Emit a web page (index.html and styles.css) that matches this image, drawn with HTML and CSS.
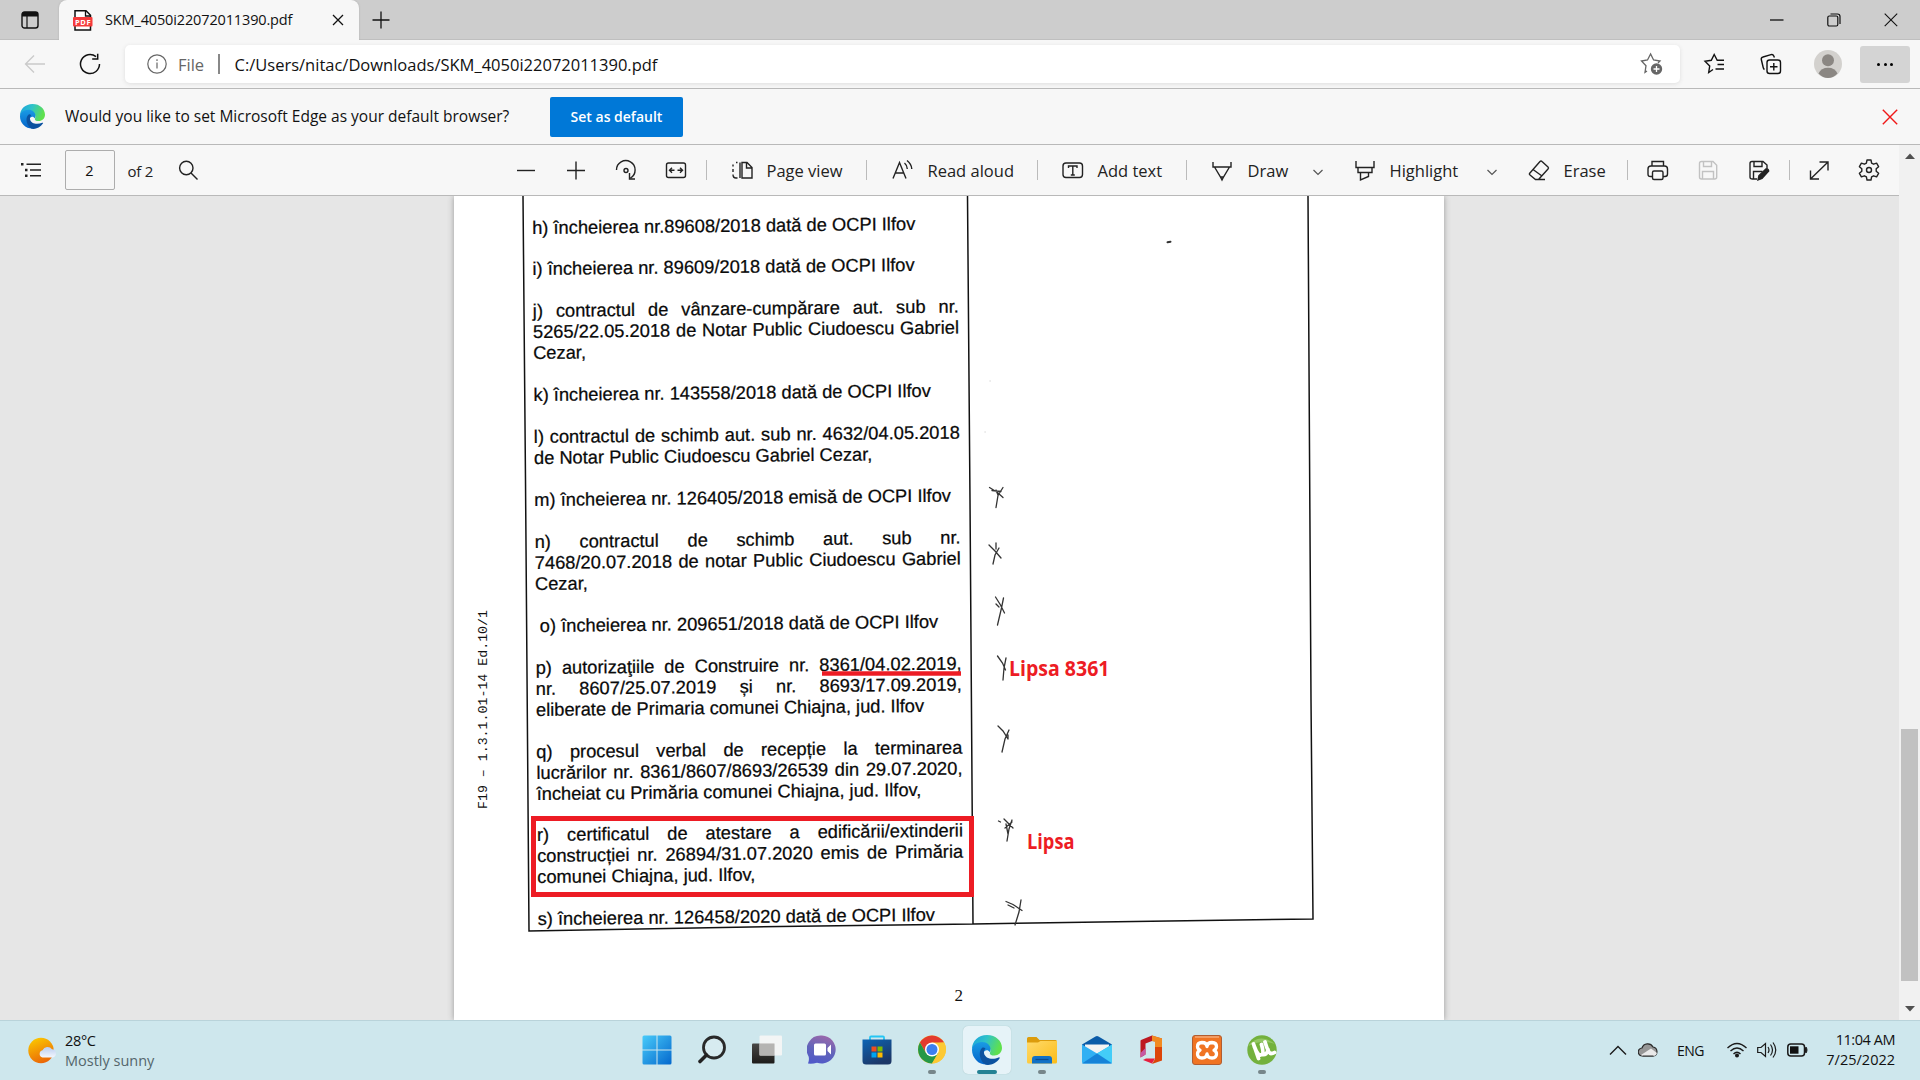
FILE: index.html
```html
<!DOCTYPE html>
<html lang="en">
<head>
<meta charset="utf-8">
<title>SKM_4050i22072011390.pdf</title>
<link rel="stylesheet" href="styles.css">
</head>
<body>
<svg width="0" height="0" class="defs">
  <defs>
    <linearGradient id="eg" x1="0" y1="0" x2="1" y2=".3"><stop offset="0" stop-color="#1ba0e0"/><stop offset=".5" stop-color="#2fc3c8"/><stop offset="1" stop-color="#5fe04e"/></linearGradient>
    <linearGradient id="eb" x1="0" y1="0" x2="0" y2="1"><stop offset="0" stop-color="#1a9be4"/><stop offset="1" stop-color="#0463c9"/></linearGradient>
    <symbol id="edge" viewBox="0 0 30 30">
      <path d="M0 14C0 6 6.500 0 15 0c9 0 15 6 15 13 0 4.500-3.500 7.500-7.500 7.500-3.500 0-5-1.300-4.600-2.600 1.400-2.900.5-7.900-5.900-7.900C6 10 1 12 0 14z" fill="url(#eg)"/>
      <path d="M0 15C0 11 4 7 10 7c5 0 8.500 3.300 8.500 7 0 1.600-.6 2.900-.8 3.300C16 14 12 15 11.500 18.500c-.4 5 4.500 8.500 9 9.500C18 30 9 31 4 25 1.500 22 0 19 0 15z" fill="url(#eb)"/>
      <path d="M10.500 12.500C6 16 7 26 14 29.800c5 .8 10.500-1.900 13.500-6.300.6-.9 0-1.400-.9-1C21 25 13 24 12 18c-.3-2 .5-3.500 1.500-4.500-.8-.9-2-1.300-3-1z" fill="#0c52a0"/>
    </symbol>
  </defs>
</svg>

<header class="tabbar">
  <div class="tab-actions"><svg width="18" height="18" viewBox="0 0 18 18"><rect x="1" y="1" width="16" height="16" rx="2.500" fill="none" stroke="#111" stroke-width="1.400"/><path d="M1 2.500Q1 1 3 1h12q2 0 2 1.500V5.500H1z" fill="#111"/><path d="M6 5v12" stroke="#111" stroke-width="1.200"/></svg></div>
  <div class="tab">
    <svg class="tab-icon" width="20" height="21" viewBox="0 0 20 21"><path d="M2 .8h11l4.500 4.500V20H2z" fill="#fff" stroke="#111" stroke-width="1.500"/><path d="M12.500 1v5H17.500" fill="none" stroke="#111" stroke-width="1.300"/><rect x="0" y="7" width="19.500" height="9.500" rx="1" fill="#f53b3b"/><text x="2" y="14.500" font-size="7.500" textLength="15.500" class="pdf-badge">PDF</text></svg>
    <span class="tab-title">SKM_4050i22072011390.pdf</span>
    <svg class="tab-close" width="12" height="12" viewBox="0 0 12 12"><path d="M1 1l10 10M11 1L1 11" stroke="#111" stroke-width="1.300"/></svg>
  </div>
  <svg class="newtab" width="18" height="18" viewBox="0 0 18 18"><path d="M9 .5v17M.5 9h17" stroke="#111" stroke-width="1.300"/></svg>
  <div class="window-controls">
    <svg width="14" height="14" viewBox="0 0 14 14"><path d="M0 7h13.500" stroke="#000" stroke-width="1.200"/></svg>
    <svg width="14" height="14" viewBox="0 0 14 14" fill="none" stroke="#111" stroke-width="1.200"><rect x=".8" y="3" width="10" height="10" rx="1.500"/><path d="M3.500 1h7q2.500 0 2.500 2.500v7.500"/></svg>
    <svg width="14" height="14" viewBox="0 0 14 14"><path d="M.7.700l12.500 12.500M13.200.700L.700 13.200" stroke="#111" stroke-width="1.100"/></svg>
  </div>
</header>

<nav class="navbar">
  <svg class="back" width="22" height="20" viewBox="0 0 22 20" fill="none" stroke="#cacaca" stroke-width="1.300"><path d="M21 10H1.500M10 1.500L1.500 10l8.500 8.500"/></svg>
  <svg class="reload" width="22" height="22" viewBox="0 0 22 22" fill="none" stroke="#111" stroke-width="1.500"><path d="M20.500 11a9.500 9.500 0 1 1-3.500-7.300M18.700.7v5.300h-5.500"/></svg>
  <div class="address">
    <svg class="info" width="20" height="20" viewBox="0 0 20 20" fill="none" stroke="#666" stroke-width="1.200"><circle cx="10" cy="10" r="9.200"/><path d="M10 8.500v6M10 5.300v1.600"/></svg>
    <span class="scheme">File</span><span class="bar"></span>
    <span class="url">C:/Users/nitac/Downloads/SKM_4050i22072011390.pdf</span>
    <svg class="addfav" width="24" height="24" viewBox="0 0 24 24"><path d="M7 19l-2 1.300 1-6.600L1.500 9l6-1L10.600 2l3 6 6.400 1-2 2" fill="none" stroke="#666" stroke-width="1.300"/><circle cx="16.500" cy="17" r="5.700" fill="#666"/><path d="M16.500 14v6M13.500 17h6" stroke="#fff" stroke-width="1.300"/></svg>
  </div>
  <div class="nav-icons">
    <svg width="24" height="24" viewBox="0 0 24 24" fill="none" stroke="#111" stroke-width="1.400"><path d="M10 17.500L5.700 20.500l1-6.500L2 9.300l6.300-1L11.200 2.500l3 5.800H21M14.500 12.500H21M12.500 17H21"/></svg>
    <svg width="24" height="24" viewBox="0 0 24 24" fill="none" stroke="#111" stroke-width="1.400"><rect x="8" y="8" width="13.500" height="13.500" rx="2.500"/><path d="M14.800 11v7.500M11 14.800h7.500M5.500 17.500Q4.500 17 4.200 15.500L2.300 7.500Q2 5.500 4 5l8-2.400q2-.6 2.800 1.500l.6 1.500"/></svg>
    <svg width="28" height="28" viewBox="0 0 28 28"><circle cx="14" cy="14" r="14" fill="#d3d1ce"/><circle cx="14" cy="10.300" r="6" fill="#8b8783"/><path d="M4.500 23.500Q7 17.700 14 17.700t9.500 5.800Q19 28 14 28t-9.500-4.500z" fill="#8b8783"/></svg>
    <span class="menu"><i></i><i></i><i></i></span>
  </div>
</nav>

<section class="infobar">
  <svg width="25" height="25"><use href="#edge"/></svg>
  <span class="info-text">Would you like to set Microsoft Edge as your default browser?</span>
  <button class="default-btn">Set as default</button>
  <svg class="dismiss" width="16" height="16" viewBox="0 0 16 16"><path d="M.8.800l14.400 14.400M15.200.8L.800 15.200" stroke="#f01818" stroke-width="1.400"/></svg>
</section>

<div class="viewer">
  <main class="pane">
    <div class="pdfbar">
      <svg class="i" viewBox="0 0 24 24"><path d="M7.500 6.300H22M11 12h11M11 17.700h11" /><path d="M2 6.300h2.500M6 12h2.500M6 17.700h2.500" stroke-width="2.400"/></svg>
      <span class="pagebox">2</span>
      <span class="t oftwo">of 2</span>
      <svg class="i" viewBox="0 0 24 24"><circle cx="10.300" cy="10" r="6.700"/><path d="M15 15l6.500 6.500"/></svg>
      <svg class="i" viewBox="0 0 24 24"><path d="M3 12.500h18"/></svg>
      <svg class="i" viewBox="0 0 24 24"><path d="M3 12.500h18M12 3.500v18"/></svg>
      <svg class="i" viewBox="0 0 24 24"><path d="M2.500 12A9.300 9.300 0 1 1 16.500 20M15.500 15v6h5.500"/><circle cx="12" cy="12.500" r="2"/></svg>
      <svg class="i" viewBox="0 0 24 24"><rect x="2.500" y="5" width="19" height="14.500" rx="2"/><path d="M10.500 12.300H5.500M8 9.800l-2.500 2.500L8 14.800M13.500 12.300h5M16 9.800l2.500 2.500L16 14.800"/></svg>
      <b></b>
      <svg class="i" viewBox="0 0 24 24"><path d="M10 4.500v15.500M7.500 4.500H6M3 6.500v2M3 11v3M3 16.500Q3 20 6 20h1.500"/><path d="M12 4.500h5l5 5V20H12zM16.500 4.500v5.500H22"/></svg>
      <span class="t pv">Page view</span>
      <b></b>
      <svg class="i" viewBox="0 0 24 24"><path d="M2 20.500L8.500 4.500 15 20.500M4.500 15h8M13.500 5Q16 7 16.300 11M16 2.500Q20.500 6 20.800 11"/></svg>
      <span class="t ra">Read aloud</span>
      <b></b>
      <svg class="i" viewBox="0 0 24 24"><rect x="2" y="5" width="19.500" height="14.500" rx="3"/><path d="M7.500 10V8h8.500v2M11.800 8v9M9.800 17h4"/></svg>
      <span class="t at">Add text</span>
      <b></b>
      <svg class="i" viewBox="0 0 24 24"><path d="M3 4v5h18V4M4.500 9l6 10h3l6-10M10.500 19L12 22l1.500-3"/></svg>
      <span class="t dr">Draw</span>
      <svg class="c" viewBox="0 0 14 10"><path d="M2.500 3L7 7.500 11.500 3"/></svg>
      <svg class="i" viewBox="0 0 24 24"><path d="M3 3v6.500h18V3M5 9.500v5h14v-5M7.500 14.500V22l8-3.500v-4"/></svg>
      <span class="t hl">Highlight</span>
      <svg class="c" viewBox="0 0 14 10"><path d="M2.500 3L7 7.500 11.500 3"/></svg>
      <svg class="i" viewBox="0 0 24 24"><path d="M2.500 15.500L13 3.500Q14 2.500 15 3.500l6 5.500q1 1 0 2L11.500 21.500H8.500L3 17Q2 16.200 2.500 15.500zM6 11.500l9 6.500M8.500 21.500h9.500"/></svg>
      <span class="t er">Erase</span>
      <b></b>
      <svg class="i" viewBox="0 0 24 24"><path d="M6.500 18.500H4.500Q2 18.500 2 16V11q0-3 3-3h13.500q3 0 3 3v5q0 2.500-2.500 2.500H17M6 8V3.500h11.500V8"/><rect x="6.500" y="13" width="10.500" height="8.500" rx="1.500"/></svg>
      <svg class="i off" viewBox="0 0 24 24"><path d="M3.500 5.500Q3.500 3.500 5.500 3.500H17l3.700 3.700V19q0 2-2 2H5.500q-2 0-2-2zM7.500 3.500v5h8v-5M6.500 21v-7.500h11V21"/></svg>
      <svg class="i" viewBox="0 0 24 24"><path d="M10 21H5.500q-2.500 0-2.500-2V5.500Q3 3.500 5 3.500H16l4 3.500v4M7 3.500v5h8v-5M6.500 21v-7.500h9"/><path d="M11 22l1-4.500 7-6.500q2.500-.5 2.700 2L15 20.500z" fill="#222"/></svg>
      <b></b>
      <svg class="i" viewBox="0 0 24 24"><path d="M3.500 21L21 4M12.500 4H21v8.500M3.500 12.500V21H12"/></svg>
      <svg class="i" viewBox="0 0 24 24"><path d="M10 2h4l.6 3.100 2 1.100 3-1 2 3.500-2.400 2.100v2.400l2.400 2.100-2 3.500-3-1-2 1.100L14 22h-4l-.6-3.100-2-1.100-3 1-2-3.500 2.400-2.100v-2.400L2.400 8.700l2-3.500 3 1 2-1.100z" stroke-linejoin="round"/><circle cx="12" cy="12" r="2.500"/></svg>
    </div>
    <div class="desk">
      <article class="sheet">
        <div class="scan-text">
          <p>h) încheierea nr.89608/2018 dată de OCPI Ilfov</p>
          <p>i) încheierea nr. 89609/2018 dată de OCPI Ilfov</p>
          <p><span>j) contractul de vânzare-cumpărare aut. sub nr.</span><span>5265/22.05.2018 de Notar Public Ciudoescu Gabriel</span>Cezar,</p>
          <p>k) încheierea nr. 143558/2018 dată de OCPI Ilfov</p>
          <p><span>l) contractul de schimb aut. sub nr. 4632/04.05.2018</span>de Notar Public Ciudoescu Gabriel Cezar,</p>
          <p>m) încheierea nr. 126405/2018 emisă de OCPI Ilfov</p>
          <p><span>n) contractul de schimb aut. sub nr.</span><span>7468/20.07.2018 de notar Public Ciudoescu Gabriel</span>Cezar,</p>
          <p class="indent">o) încheierea nr. 209651/2018 dată de OCPI Ilfov</p>
          <p><span>p) autorizaţiile de Construire nr. 8361/04.02.2019,</span><span>nr. 8607/25.07.2019 și nr. 8693/17.09.2019,</span>eliberate de Primaria comunei Chiajna, jud. Ilfov</p>
          <p><span>q) procesul verbal de recepție la terminarea</span><span>lucrărilor nr. 8361/8607/8693/26539 din 29.07.2020,</span>încheiat cu Primăria comunei Chiajna, jud. Ilfov,</p>
          <p><span>r) certificatul de atestare a edificării/extinderii</span><span>construcției nr. 26894/31.07.2020 emis de Primăria</span>comunei Chiajna, jud. Ilfov,</p>
          <p>s) încheierea nr. 126458/2020 dată de OCPI Ilfov</p>
        </div>
        <svg class="markup" viewBox="454 196 990 824">
          <g fill="none" stroke="#111" stroke-width="1.500">
            <path d="M523 196L525.500 480 529 931L780 926.500 973 924 1100 922 1313 919L1311 700 1308 196M967.500 196L970 500 973 924"/>
          </g>
          <g fill="none" stroke="#333" stroke-width="1.300" stroke-linecap="round">
            <path d="M989.500 487.500l8 5 5.500 5M1003 487.500l-5 8-2 12M992 490.500l9 1M996 490l2 5"/>
            <path d="M989 545l6 6 6 7M999 548l-4 7-2 9M996 543l0 6"/>
            <path d="M995.500 597l5 8 4 8M1003.500 598l-2 10-4 17M996 604l3 3"/>
            <path d="M997.500 656l5 7 3 7M1006 658l-2 10-1 12"/>
            <path d="M998 726l5 5 5 8M1009 730l-4 9-3 13M1008 735v4"/>
            <path d="M1004 819l4 4 5 5M1012 820l-3 9-2 12M998.500 821l2 1M1005 828l7-6M1006 824l2 10"/>
            <path d="M1006 901.500l7 3 9 6M1021 900l-2 12-4 13M1008 905l6 3"/>
            <path d="M1167.500 242.300l3-.6" stroke-width="2"/>
          </g>
          <path d="M989.500 380.500h1.200v1h-1.200zM984.500 431.500h1.200v1h-1.200z" fill="#ccc"/>
          <path d="M822 673.500H961" stroke="#ed1c24" stroke-width="4.600"/>
          <rect x="533.500" y="818.500" width="438" height="76" fill="none" stroke="#ed1c24" stroke-width="5"/>
          <text class="note" x="1009" y="676" textLength="100.500" lengthAdjust="spacingAndGlyphs">Lipsa 8361</text>
          <text class="note" x="1027" y="849" textLength="47.500" lengthAdjust="spacingAndGlyphs">Lipsa</text>
          <text class="form-code" transform="translate(486.800 809) rotate(-90)" textLength="199">F19 – 1.3.1.01-14 Ed.10/1</text>
          <text class="folio" x="954.500" y="1001">2</text>
        </svg>
      </article>
    </div>
  </main>
  <aside class="scrollbar">
    <svg width="12" height="7" viewBox="0 0 12 7"><path d="M6 .5L11 6H1z" fill="#505050"/></svg>
    <div class="thumb"></div>
    <svg width="12" height="7" viewBox="0 0 12 7"><path d="M6 6.500L11 1H1z" fill="#505050"/></svg>
  </aside>
</div>

<footer class="taskbar">
  <div class="weather">
    <svg width="30" height="28" viewBox="0 0 30 28"><defs><linearGradient id="sun" x1=".2" y1="0" x2=".6" y2="1"><stop offset="0" stop-color="#fbc900"/><stop offset="1" stop-color="#ea6508"/></linearGradient><linearGradient id="cl" x1="0" y1="0" x2="0" y2="1"><stop offset="0" stop-color="#b9cdf0"/><stop offset="1" stop-color="#f4f7fd"/></linearGradient></defs><circle cx="13" cy="13.500" r="12.700" fill="url(#sun)"/><path d="M14.500 20.500a3.700 3.700 0 0 1 0-7.200 5.500 5.500 0 0 1 9.500-1 4.200 4.200 0 0 1 1 8.200z" fill="url(#cl)"/></svg>
    <div class="weather-text"><span class="temp">28°C</span><span class="cond">Mostly sunny</span></div>
  </div>
  <div class="apps">
    <span class="app"><svg viewBox="0 0 30 30"><defs><linearGradient id="w" x1="0" y1="0" x2="1" y2="1"><stop offset="0" stop-color="#48cbfa"/><stop offset="1" stop-color="#0468cd"/></linearGradient></defs><path d="M.5 2Q.5.500 2 .500H14.500V14.500H.5zM15.500.500H28q1.500 0 1.500 1.500V14.500H15.500zM.5 15.500H14.500V29.500H2Q.500 29.500.500 28zM15.500 15.500H29.500V28q0 1.500-1.500 1.500H15.500z" fill="url(#w)"/></svg></span>
    <span class="app"><svg viewBox="0 0 30 30"><circle cx="17" cy="12.500" r="10.500" fill="#fff" fill-opacity=".2" stroke="#292929" stroke-width="2.800"/><path d="M9.500 20L3 26.500" stroke="#222" stroke-width="3.600" stroke-linecap="round"/></svg></span>
    <span class="app"><svg viewBox="0 0 30 30"><defs><linearGradient id="tv" x1="0" y1="0" x2="0" y2="1"><stop offset="0" stop-color="#474745"/><stop offset="1" stop-color="#1d1c1a"/></linearGradient></defs><rect x="0" y="8.500" width="22.500" height="20" rx="1" fill="url(#tv)"/><rect x="7.500" y=".5" width="22.500" height="20" rx="1" fill="#f5f5f5" fill-opacity=".93"/><rect x="7.500" y="8.500" width="15" height="12" fill="#b5b4b2"/></svg></span>
    <span class="app"><svg viewBox="0 0 30 30"><defs><linearGradient id="ch" x1=".6" y1="0" x2=".3" y2="1"><stop offset="0" stop-color="#9a68ab"/><stop offset=".5" stop-color="#6264ba"/><stop offset="1" stop-color="#5059c9"/></linearGradient></defs><path d="M15 .5a14 14 0 1 1-5 27.200Q5.500 29 1 28.500q1.500-4 .6-7A14 14 0 0 1 15 .5z" fill="url(#ch)"/><rect x="7" y="8.500" width="12" height="12" rx="1.500" fill="#fff"/><path d="M20.500 13l3.500-3.500v10L20.500 16z" fill="#fff"/></svg></span>
    <span class="app"><svg viewBox="0 0 30 30"><defs><linearGradient id="st" x1="0" y1="0" x2=".5" y2="1"><stop offset="0" stop-color="#0c65b5"/><stop offset="1" stop-color="#1c3767"/></linearGradient></defs><path d="M8 6V2.500q0-1 1-1h12q1 0 1 1V6" fill="none" stroke="#25c6f4" stroke-width="1.800"/><path d="M.5 4.500h29V26q0 3.500-3.500 3.500H4Q.5 29.500.5 26z" fill="url(#st)"/><path d="M9.500 11.500h5v5h-5z" fill="#f04e1f"/><path d="M15.500 11.500h5v5h-5z" fill="#7fba00"/><path d="M9.500 17.500h5v5h-5z" fill="#00a4ef"/><path d="M15.500 17.500h5v5h-5z" fill="#ffb900"/></svg></span>
    <span class="app open"><svg viewBox="0 0 30 30"><circle cx="15" cy="14.500" r="14" fill="#fcc934"/><path d="M2.900 7.500A14 14 0 0 1 27.100 7.500L15 8.500 9 18z" fill="#e33b2e"/><path d="M2.900 7.500A14 14 0 0 0 15 28.500L21 18 9 18z" fill="#259847"/><path d="M15 7.500h12.100A14 14 0 0 1 15 28.500l6.500-10.500z" fill="#fcc934"/><circle cx="15" cy="14.500" r="7" fill="#fff"/><circle cx="15" cy="14.500" r="5.500" fill="#3c7ff0"/></svg></span>
    <span class="app open active"><svg viewBox="0 0 30 30"><use href="#edge"/></svg></span>
    <span class="app open"><svg viewBox="0 0 30 30"><defs><linearGradient id="fo" x1="0" y1="0" x2="1" y2="1"><stop offset="0" stop-color="#ffda6b"/><stop offset="1" stop-color="#fbbc18"/></linearGradient></defs><path d="M0 3.500Q0 2 1.500 2H9.500l3 3H28.500Q30 5 30 6.500V12H0z" fill="#dc9c0c"/><path d="M0 7.500H11L13.500 6H30V27q0 1.500-1.500 1.500H1.500Q0 28.500 0 27z" fill="url(#fo)"/><path d="M5 28.500V24q0-3 3-3h14q3 0 3 3v4.500z" fill="#1171c6"/><path d="M8.500 24.500h13" stroke="#0a4c90" stroke-width="1.200"/></svg></span>
    <span class="app"><svg viewBox="0 0 30 30"><path d="M0 9.500L13.500 1.500q1.500-1 3 0L30 9.500V15H0z" fill="#0a5ba8"/><path d="M3 9.500H27V22H3z" fill="#f3f3f3"/><path d="M0 9.500L15 18.500 30 9.500V27q0 1.500-1.500 1.500h-27Q0 28.500 0 27z" fill="#31b0f3"/><path d="M15 18.500L30 9.500V28z" fill="#43cdf8"/><path d="M0 28.500L15 18.500 30 28.500z" fill="#1683d8"/></svg></span>
    <span class="app"><svg viewBox="0 0 30 30"><path d="M15 .5L4 5Q3.500 5.300 3.500 6V22.500L8.500 19.500V8.500L15 6z" fill="#bd1921"/><path d="M3.500 22.500L8.500 19.500V13L3.500 18z" fill="#c558a4"/><path d="M15 .5L25 3.500V25.500L15 29 18 24V6.500L15 6z" fill="#dc4509"/><path d="M25 3.500V12H18V6.500L15 6V.500z" fill="#f18a22"/><path d="M6 25L9 23.500H18L15 28.500z" fill="#e61e3e"/></svg></span>
    <span class="app"><svg viewBox="0 0 30 30"><rect x=".5" y=".5" width="29" height="29" rx="2.500" fill="#f07423" stroke="#b15d31"/><path d="M3 2h24" stroke="#f5aa78" stroke-width="1.500"/><path d="M10 7.500Q14.500 7.500 15 11.500 15.500 7.500 20 7.500 24.500 7.800 24.500 11.500 24.500 14 22 15.200 24.500 16.300 24.500 19 24.500 22.700 20 23 15.500 23 15 19 14.500 23 10 23 5.500 22.700 5.500 19 5.500 16.300 8 15.200 5.500 14 5.500 11.500 5.500 7.800 10 7.500z" fill="none" stroke="#fff" stroke-width="3.300" stroke-linejoin="round"/></svg></span>
    <span class="app open"><svg viewBox="0 0 30 30"><circle cx="15" cy="15" r="14.700" fill="#73b13d"/><path d="M1 11Q12 -3 28 9 15 4 1 11z" fill="#93c764"/><path d="M6.500 9l5 14.500M7.300 11.500Q11 22 15 19.500 17 18 14.500 9.500M18 7q3.500 12 6 11.500 2 0 3.500-1M15 19.500q5 1 6-5" fill="none" stroke="#fff" stroke-width="3.800" stroke-linecap="round"/></svg></span>
  </div>
  <div class="tray">
    <svg width="18" height="12" viewBox="0 0 18 12"><path d="M1 10.500l8-8 8 8" fill="none" stroke="#1b1b1b" stroke-width="1.400"/></svg>
    <svg class="cloud" width="20" height="15" viewBox="0 0 20 15"><path d="M4.500 14A3.900 3.900 0 0 1 4 6 6 6 0 0 1 15 5a4.600 4.600 0 0 1 .5 9z" fill="#969696" stroke="#2a2a2a" stroke-width="1.200"/><path d="M3 13L13 6.500l6 4.500q-1 3-3.500 3H4.500z" fill="#e9e9e9"/><path d="M4.500 14h11" stroke="#2a2a2a"/></svg>
    <span class="lang">ENG</span>
    <svg class="wifi" width="20" height="16" viewBox="0 0 20 16" fill="none" stroke="#1b1b1b" stroke-width="1.400"><path d="M.5 6Q10-3 19.500 6M3.500 9Q10 3 16.500 9M6.500 12Q10 8.500 13.500 12"/><circle cx="10" cy="13.500" r="1.300" fill="#1b1b1b"/></svg>
    <svg class="sound" width="20" height="18" viewBox="0 0 20 18" fill="none" stroke="#1b1b1b" stroke-width="1.200"><path d="M.7 6.500H4L8.500 2.500v13L4 11.500H.7zM11 6q2 3 0 6M13.500 3.500q4 5.500 0 11M16 1.500q5.500 7.500 0 15"/></svg>
    <svg class="battery" width="21" height="14" viewBox="0 0 21 14"><rect x=".8" y="1" width="16.700" height="12" rx="3" fill="none" stroke="#1b1b1b" stroke-width="1.500"/><path d="M3 3.300h8.500v7.400H3z" fill="#111"/><path d="M18.500 4.500h1q1 2.500 0 5h-1z" fill="#1b1b1b" stroke="#1b1b1b"/></svg>
    <div class="clock"><span>11:04 AM</span><span class="date">7/25/2022</span></div>
  </div>
</footer>
</body>
</html>
```
FILE: styles.css
```css
* { box-sizing: border-box; }
body {
  margin: 0;
  width: 1920px;
  height: 1080px;
  overflow: hidden;
  display: flex;
  flex-direction: column;
  font-family: "Open Sans", "Noto Sans", sans-serif;
  color: #111;
  background: #f7f7f7;
}
svg { display: block; flex: none; }
.defs { position: absolute; }
span { white-space: nowrap; }

/* tab strip */
.tabbar {
  height: 40px;
  background: #cdcdcd;
  display: flex;
  align-items: center;
  box-shadow: inset 0 -1px #bfbfbf;
  flex: none;
}
.tab-actions { width: 59px; padding-left: 21px; }
.tab {
  width: 300px;
  height: 40px;
  background: #f7f7f7;
  border-radius: 8px 8px 0 0;
  display: flex;
  align-items: center;
  padding: 0 15px 0 14px;
  box-shadow: 0 0 2px #aaa;
  clip-path: inset(-2px -2px 0 -2px);
}
.tab-title { font-size: 14.5px; letter-spacing: -0.14px; margin-left: 12px; padding-bottom: 1px; flex: 1; }
.pdf-badge { fill: #fff; font-weight: 700; font-family: "Open Sans", sans-serif; }
.newtab { margin-left: 13px; }
.window-controls { margin-left: auto; padding-right: 22px; display: flex; gap: 43px; }

/* address row */
.navbar { height: 49px; display: flex; align-items: center; border-bottom: 1px solid #b9b9b9; flex: none; }
.back { margin-left: 24px; }
.reload { margin-left: 33px; }
.address {
  margin-left: 24px;
  width: 1555px;
  height: 38px;
  background: #fff;
  border-radius: 5px;
  box-shadow: 0 1px 4px #dedede;
  display: flex;
  align-items: center;
  padding: 0 16px 0 22px;
  font-size: 16.5px;
}
.scheme { margin-left: 11px; width: 40px; color: #666; }
.bar { width: 1.5px; height: 20px; background: #888; margin-right: 15px; }
.url { flex: 1; }
.nav-icons { display: flex; align-items: center; margin-left: 23px; gap: 31.5px; }
.menu {
  width: 50px;
  height: 37px;
  margin-left: -13.5px;
  background: #d4d4d4;
  border-radius: 3px;
  display: flex;
  align-items: center;
  justify-content: center;
  gap: 3.5px;
}
.menu i { width: 3px; height: 3px; border-radius: 2px; background: #000; }

/* default browser prompt */
.infobar { height: 56px; display: flex; align-items: center; padding: 0 22px 0 20px; border-bottom: 1px solid #b9b9b9; flex: none; }
.info-text { margin-left: 20px; width: 485px; font-size: 15.5px; padding-bottom: 1px; }
.default-btn {
  width: 133px;
  height: 40px;
  border: 0;
  border-radius: 2px;
  background: #0078d7;
  color: #fff;
  font: 600 14px "Open Sans", sans-serif;
  padding: 0;
}
.dismiss { margin-left: auto; }

/* pdf viewer */
.viewer { height: 875px; display: flex; flex: none; }
.pane { width: 1899px; display: flex; flex-direction: column; }
.pdfbar {
  height: 51px;
  flex: none;
  border-bottom: 1px solid #b9b9b9;
  padding-left: 18.5px;
  display: grid;
  align-items: center;
  grid-template-columns: 46px 63px 48px 338px 50px 50px 50px 42px 24px 37px 99px 25px 37px 109px 24px 37px 88px 24px 38px 63px 42px 37px 95px 42px 37px 63px 19px 50px 51px 42px 18px 50px 42px;
}
.i { width: 24px; height: 24px; fill: none; stroke: #222; stroke-width: 1.4; }
.c { width: 14px; height: 10px; fill: none; stroke: #555; stroke-width: 1.2; margin-top: 3px; }
.off { stroke: #c2c2c2; }
.pdfbar b { width: 1.5px; height: 20px; background: #bbb; }
.pagebox {
  width: 50px;
  height: 40px;
  border: 1px solid #adadad;
  border-radius: 2px;
  text-align: center;
  line-height: 39px;
  font-size: 14.5px;
}
.t { font-size: 16.5px; color: #222; padding-top: 1px; }
.oftwo { font-size: 15px; letter-spacing: -0.2px; }

.desk { flex: 1; background: #e6e6e6; padding-left: 454px; min-height: 0; overflow: hidden; }
.sheet {
  position: relative;
  width: 990px;
  height: 824px;
  background: #fff;
  box-shadow: 0 0 6px #999;
  clip-path: inset(0 -8px 0 -8px);
}
.scan-text {
  padding: 20.5px 0 0 78px;
  width: 504px;
  display: flex;
  flex-direction: column;
  gap: 20.9px;
  font: 18.3px/21px "Liberation Sans", Arial, sans-serif;
  color: #0a0a0a;
  /* scanned sheet is slightly turned */
  transform: matrix(1, -0.0105, 0.0079, 1, 0, 0);
  transform-origin: 78px 16px;
}
.scan-text p { margin: 0; white-space: nowrap; -webkit-text-stroke: 0.25px #0a0a0a; }
.scan-text span { display: block; text-align: justify; text-align-last: justify; white-space: normal; }
.scan-text .indent { padding-left: 4.5px; }
.markup { position: absolute; left: 0; top: 0; width: 990px; height: 824px; }
.note { font: 700 21px "Open Sans", sans-serif; fill: #ed1c24; }
.form-code { font: 13.27px "Liberation Mono", monospace; fill: #111; }
.folio { font: 17px "Liberation Serif", serif; fill: #111; }

.scrollbar {
  width: 21px;
  background: #f1f1f1;
  display: flex;
  flex-direction: column;
  align-items: center;
  justify-content: space-between;
  padding: 8px 0;
}
.thumb { width: 17px; height: 252px; background: #c1c1c1; margin-top: 545px; }

/* taskbar */
.taskbar { height: 60px; background: #cee7ed; border-top: 1px solid #b9d3da; display: flex; flex: none; }
.weather { width: 629.5px; display: flex; align-items: center; padding-left: 28px; }
.weather-text { display: flex; flex-direction: column; margin-left: 7px; font-size: 14.5px; line-height: 20px; }
.temp { letter-spacing: -0.35px; }
.cond { color: #54666b; }
.apps { display: flex; align-items: center; }
.app { width: 55px; height: 48px; display: flex; align-items: center; justify-content: center; position: relative; margin-top: -1px; }
.app svg { width: 30px; height: 30px; }
.active::before { content: ""; position: absolute; inset: 0 3.5px; background: #e6f3f8; border-radius: 5px; box-shadow: 0 0 1px #9bb; }
.active svg { position: relative; }
.open::after { content: ""; position: absolute; bottom: 0; width: 8px; height: 4px; border-radius: 2px; background: #76868a; }
.active::after { width: 20px; background: #248294; }
.tray { margin-left: auto; padding-right: 25px; display: flex; align-items: center; }
.tray > svg { margin-top: -2px; }
.cloud { margin-left: 11px; }
.lang { margin-left: 19px; width: 50px; font-size: 14px; letter-spacing: -0.5px; padding-bottom: 1px; }
.sound { margin-left: 10px; }
.battery { margin-left: 10px; }
.clock { width: 87px; display: flex; flex-direction: column; text-align: right; font-size: 14.5px; line-height: 20px; letter-spacing: -0.45px; padding-bottom: 1px; }
.date { letter-spacing: 0; }
```
